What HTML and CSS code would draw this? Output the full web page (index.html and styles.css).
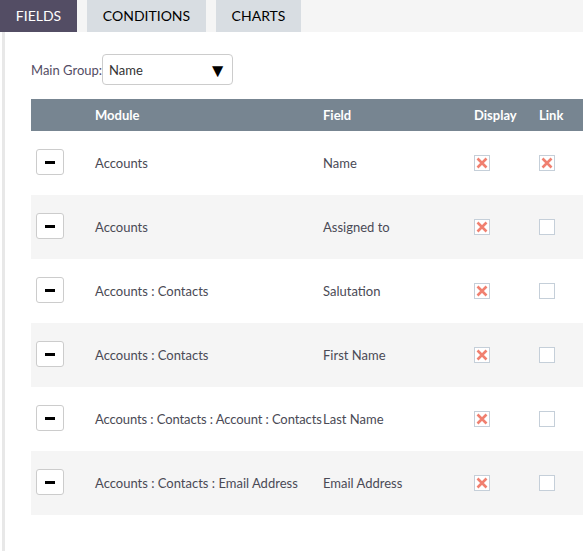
FILE: index.html
```html
<!DOCTYPE html>
<html>
<head>
<meta charset="utf-8">
<link rel="stylesheet" href="styles.css">
</head>
<body>
<div class="tabs">
  <div class="tab active t1">FIELDS</div>
  <div class="tab t2">CONDITIONS</div>
  <div class="tab t3">CHARTS</div>
</div>
<div class="content">
  <div class="group">
    <span class="label">Main Group:</span>
    <div class="select"><span>Name</span><span class="arrow">&#9660;</span></div>
  </div>
  <table class="grid">
    <colgroup><col class="c1"><col class="c2"><col class="c3"><col class="c4"><col class="c5"></colgroup>
    <thead>
      <tr><th></th><th>Module</th><th>Field</th><th>Display</th><th>Link</th></tr>
    </thead>
    <tbody>
      <tr><td><span class="btn"><i></i></span></td><td>Accounts</td><td>Name</td><td><span class="cb"><svg viewBox="0 0 14 14" width="14" height="14"><path d="M2.5 2.5L11.5 11.5M11.5 2.5L2.5 11.5" stroke="#f08070" stroke-width="2.6"/></svg></span></td><td><span class="cb"><svg viewBox="0 0 14 14" width="14" height="14"><path d="M2.5 2.5L11.5 11.5M11.5 2.5L2.5 11.5" stroke="#f08070" stroke-width="2.6"/></svg></span></td></tr>
      <tr><td><span class="btn"><i></i></span></td><td>Accounts</td><td>Assigned to</td><td><span class="cb"><svg viewBox="0 0 14 14" width="14" height="14"><path d="M2.5 2.5L11.5 11.5M11.5 2.5L2.5 11.5" stroke="#f08070" stroke-width="2.6"/></svg></span></td><td><span class="cb"></span></td></tr>
      <tr><td><span class="btn"><i></i></span></td><td>Accounts : Contacts</td><td>Salutation</td><td><span class="cb"><svg viewBox="0 0 14 14" width="14" height="14"><path d="M2.5 2.5L11.5 11.5M11.5 2.5L2.5 11.5" stroke="#f08070" stroke-width="2.6"/></svg></span></td><td><span class="cb"></span></td></tr>
      <tr><td><span class="btn"><i></i></span></td><td>Accounts : Contacts</td><td>First Name</td><td><span class="cb"><svg viewBox="0 0 14 14" width="14" height="14"><path d="M2.5 2.5L11.5 11.5M11.5 2.5L2.5 11.5" stroke="#f08070" stroke-width="2.6"/></svg></span></td><td><span class="cb"></span></td></tr>
      <tr><td><span class="btn"><i></i></span></td><td class="nw">Accounts : Contacts : Account : Contacts</td><td>Last Name</td><td><span class="cb"><svg viewBox="0 0 14 14" width="14" height="14"><path d="M2.5 2.5L11.5 11.5M11.5 2.5L2.5 11.5" stroke="#f08070" stroke-width="2.6"/></svg></span></td><td><span class="cb"></span></td></tr>
      <tr><td><span class="btn"><i></i></span></td><td>Accounts : Contacts : Email Address</td><td>Email Address</td><td><span class="cb"><svg viewBox="0 0 14 14" width="14" height="14"><path d="M2.5 2.5L11.5 11.5M11.5 2.5L2.5 11.5" stroke="#f08070" stroke-width="2.6"/></svg></span></td><td><span class="cb"></span></td></tr>
    </tbody>
  </table>
</div>
</body>
</html>
```
FILE: styles.css
```css
html, body { margin: 0; padding: 0; overflow: hidden; background: #fff; }
body { font-family: Lato, "Open Sans", sans-serif; font-size: 13px; color: #4a4a55; width: 583px; height: 551px; }
.tabs { display: flex; gap: 10px; height: 32px; background: #f5f5f5; }
.tab { height: 32px; line-height: 32px; background: #d8dde2; color: #000; font-size: 14px; text-align: center; }
.t1 { width: 77px; }
.t2 { width: 119px; }
.t3 { width: 85px; }
.tab.active { background: #534d64; color: #fff; }
.content { margin-left: 2px; border-left: 3px solid #e8e8e8; padding: 22px 0 0 26px; height: 519px; box-sizing: border-box; }
.group { display: flex; align-items: center; height: 31px; }
.label { color: #534d64; margin-right: 0; }
.select { box-sizing: border-box; width: 131px; height: 31px; border: 1px solid #ccc; border-radius: 4px; display: flex; align-items: center; justify-content: space-between; padding: 0 5px 0 6px; color: #333; }
.arrow { font-size: 19px; color: #000; line-height: 1; }
.grid { border-collapse: collapse; table-layout: fixed; width: 568px; margin-top: 14px; }
.c1 { width: 64px; } .c2 { width: 228px; } .c3 { width: 151px; } .c4 { width: 65px; } .c5 { width: 60px; }
.grid th { background: #778591; color: #fff; font-weight: bold; text-align: left; height: 32px; padding: 0; }
.grid td { height: 64px; padding: 0; vertical-align: middle; }
.grid tbody tr:nth-child(even) td { background: #f5f5f5; }
.nw { white-space: nowrap; overflow: visible; letter-spacing: -0.1px; }
.btn { display: flex; align-items: center; justify-content: center; width: 26px; height: 24px; border: 1px solid #ccc; border-radius: 3px; background: #fff; margin-left: 5px; margin-top: -2px; }
.btn i { display: block; width: 10px; height: 3px; background: #000; }
.cb { display: block; width: 14px; height: 14px; border: 1px solid #c5cfd9; background: #fff; }
.cb svg { display: block; }
```
